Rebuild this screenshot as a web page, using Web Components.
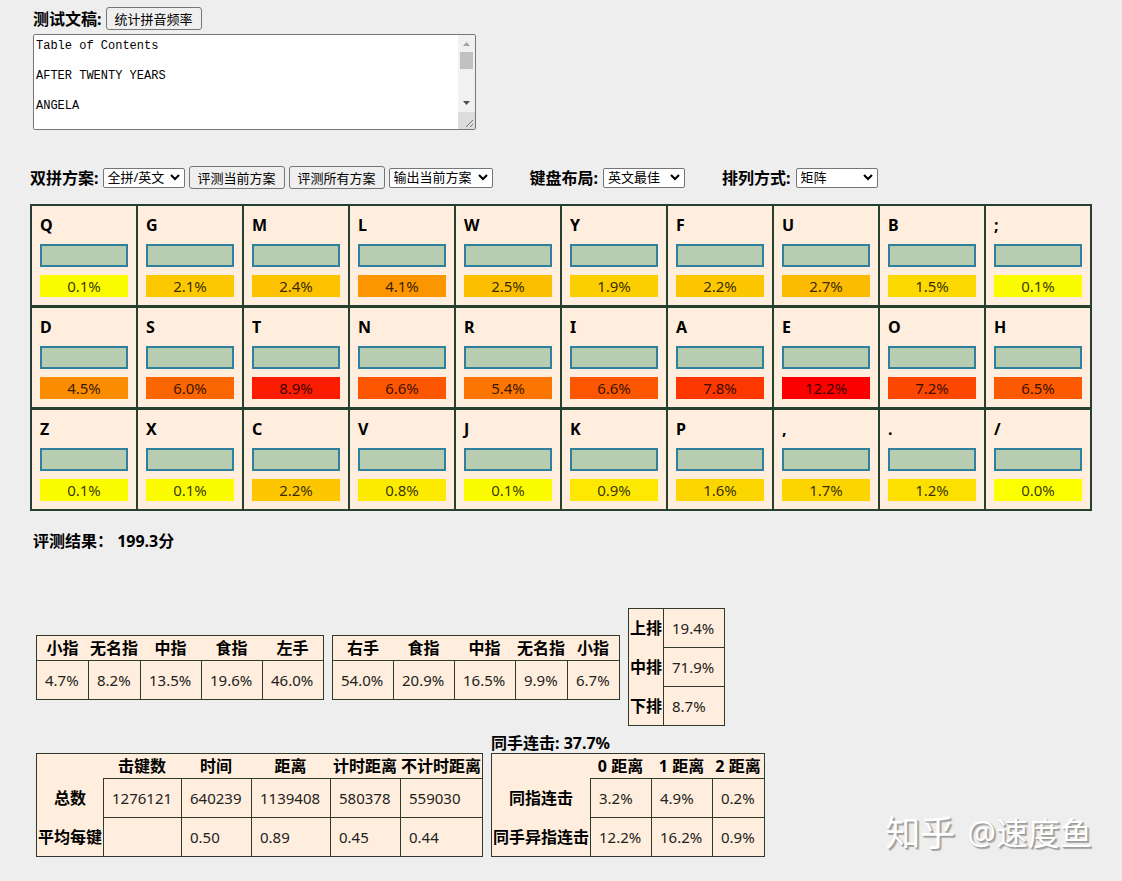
<!DOCTYPE html>
<html lang="zh-CN">
<head>
<meta charset="utf-8">
<meta name="viewport" content="width=device-width, initial-scale=1">
<title>双拼评测</title>
<style>
  body {
    margin: 0;
    padding: 7px 30px 24px;
    background: #eee;
    color: #000;
    font: 16px/24px "Noto Sans", "Noto Sans CJK SC", sans-serif;
  }
  .results { display: flex; flex-wrap: wrap; gap: 8px; margin: 0 6px; }
  .fingers { align-items: center; margin-top: 55px; }
  .totals { align-items: flex-end; margin-top: 7px; }
  h2 { margin: 18px 3px 0; font-size: 16px; line-height: 24px; }
</style>
</head>
<body>
<manuscript-box></manuscript-box>
<scheme-bar></scheme-bar>
<key-board></key-board>
<h2>评测结果： 199.3分</h2>
<div class="results fingers">
  <stat-table data-name="left"></stat-table>
  <stat-table data-name="right"></stat-table>
  <stat-table data-name="rows"></stat-table>
</div>
<div class="results totals">
  <stat-table data-name="effort"></stat-table>
  <stat-table data-name="repeat">同手连击: 37.7%</stat-table>
</div>
<author-mark><span slot="site">知乎</span>@速度鱼</author-mark>

<script>
const controls = `
  * { box-sizing: border-box; }
  label { font-weight: 700; white-space: nowrap; }
  button, select {
    font: 13px "Noto Sans", "Noto Sans CJK SC", sans-serif;
    color: #000; border: 1px solid #767676; margin: 0;
  }
  button { height: 23px; padding: 0 8px; line-height: 20px; background: #efefef; border-radius: 3px; white-space: nowrap; }
  select {
    height: 19px; padding: 0 4px; line-height: 17px; border-radius: 2px; appearance: none;
    background: #fff url("data:image/svg+xml,%3Csvg xmlns='http://www.w3.org/2000/svg' width='10' height='7'%3E%3Cpath d='M1 1l4 4 4-4' fill='none' stroke='%23000' stroke-width='2'/%3E%3C/svg%3E") no-repeat right 4px center;
  }
  .wide { width: 104px; }
  .narrow { width: 82px; }
`;

function define(name, html, setup) {
  customElements.define(name, class extends HTMLElement {
    connectedCallback() {
      if (this.shadowRoot) return;
      const root = this.attachShadow({ mode: 'open' });
      root.innerHTML = typeof html === 'function' ? html(this) : html;
      if (setup) setup(root);
    }
  });
}

define('manuscript-box', `
  <style>${controls}
    :host { display: block; margin: 0 3px; }
    .head { display: flex; align-items: center; gap: 4px; height: 23px; }
    .field { display: flex; width: 443px; max-width: 100%; height: 96px; margin-top: 4px; border: 1px solid #767676; background: #fff; border-radius: 2px; overflow: hidden; }
    textarea { flex: 1; min-width: 0; border: 0; outline: 0; padding: 4px 2px 0; resize: none; overflow: hidden; background: #fff; color: #000; font: 12px/15px "Liberation Mono", monospace; }
    svg { flex: none; width: 17px; height: 94px; }
  </style>
  <div class="head"><label for="text">测试文稿:</label><button type="button">统计拼音频率</button></div>
  <div class="field">
    <textarea id="text">Table of Contents

AFTER TWENTY YEARS

ANGELA
</textarea>
    <svg viewBox="0 0 17 94" aria-hidden="true">
      <path fill="#f1f1f1" d="M0 0h17v77H0z"/>
      <path fill="#dcdcdc" d="M0 77h17v17H0z"/>
      <path fill="#a3a3a3" d="M5 11h7L8.500 7z"/>
      <path fill="#c1c1c1" d="M2 17h13v17H2z"/>
      <path fill="#505050" d="M5 66h7l-3.500 4z"/>
      <path stroke="#777" d="M8 92l7-7M12 92l3-3"/>
    </svg>
  </div>`);

define('scheme-bar', `
  <style>${controls}
    :host { display: flex; flex-wrap: wrap; align-items: center; gap: 4px 37px; margin: 36px 0 15px; }
    div { display: flex; align-items: center; gap: 4px; height: 23px; }
    select { height: 20px; }
    label[for="layout"], label[for="order"] { padding-right: 1px; }
  </style>
  <div>
    <label for="scheme">双拼方案:</label>
    <select id="scheme" class="narrow"><option>全拼/英文</option></select>
    <button type="button">评测当前方案</button>
    <button type="button">评测所有方案</button>
    <select class="wide" aria-label="输出当前方案"><option>输出当前方案</option></select>
  </div>
  <div><label for="layout">键盘布局:</label><select id="layout" class="narrow"><option>英文最佳</option></select></div>
  <div><label for="order">排列方式:</label><select id="order" class="narrow"><option>矩阵</option></select></div>`);

define('key-cap', `
  <style>
    :host { display: grid; grid-template-rows: 22px 23px 22px; gap: 8px; padding: 8px; background: #ffeedd; min-width: 0; }
    b { line-height: 22px; }
    .slotted { box-sizing: border-box; background: #b8cdb0; border: 2px solid #2f7f9f; }
    .rate { background: var(--heat); color: rgb(0 0 0 / 80%); font-size: 15px; line-height: 22px; text-align: center; }
  </style>
  <b><slot name="key"></slot></b><div class="slotted"></div><div class="rate"><slot></slot></div>`);

const keys = [
  'Q 0.1 G 2.1 M 2.4 L 4.1 W 2.5 Y 1.9 F 2.2 U 2.7 B 1.5 ; 0.1',
  'D 4.5 S 6.0 T 8.9 N 6.6 R 5.4 I 6.6 A 7.8 E 12.2 O 7.2 H 6.5',
  'Z 0.1 X 0.1 C 2.2 V 0.8 J 0.1 K 0.9 P 1.6 , 1.7 . 1.2 / 0.0'
].join(' ').split(' ');

// Heat runs from yellow at 0% to pure red at 10% and above.
function keyCaps() {
  let out = '';
  for (let i = 0; i < keys.length; i += 2) {
    const green = Math.max(0, Math.round(255 - keys[i + 1] * 25.5));
    out += `<key-cap style="--heat: rgb(252 ${green} 0)"><span slot="key">${keys[i]}</span>${keys[i + 1]}%</key-cap>`;
  }
  return out;
}

define('key-board', () => `
  <style>
    :host { display: grid; grid-template-columns: repeat(10, 1fr); gap: 3px 2px; padding: 2px; background: #264030; }
  </style>${keyCaps()}`);

const tables = {
  left: { cols: [51, 52, 61, 61, 61], head: ['小指', '无名指', '中指', '食指', '左手'], body: [['4.7%', '8.2%', '13.5%', '19.6%', '46.0%']] },
  right: { cols: [60, 61, 61, 52, 52], head: ['右手', '食指', '中指', '无名指', '小指'], body: [['54.0%', '20.9%', '16.5%', '9.9%', '6.7%']] },
  rows: { cols: [34, 61], side: ['上排', '中排', '下排'], body: [['19.4%'], ['71.9%'], ['8.7%']] },
  effort: {
    cols: [66, 78, 70, 79, 70, 82], head: ['', '击键数', '时间', '距离', '计时距离', '不计时距离'], side: ['总数', '平均每键'],
    body: [['1276121', '640239', '1139408', '580378', '559030'], ['', '0.50', '0.89', '0.45', '0.44']]
  },
  repeat: {
    cols: [98, 61, 61, 52], head: ['', '0 距离', '1 距离', '2 距离'], side: ['同指连击', '同手异指连击'],
    body: [['3.2%', '4.9%', '0.2%'], ['12.2%', '16.2%', '0.9%']]
  }
};

define('stat-table', host => {
  const { cols, head, side, body } = tables[host.dataset.name];
  const width = cols.reduce((a, b) => a + b, 2);
  const cell = text => `<td>${text}</td>`;
  return `
  <style>
    :host { display: block; font-weight: 700; line-height: 20px; }
    table { box-sizing: border-box; width: ${width}px; table-layout: fixed; border: 1px solid #2d3a2c; border-spacing: 0; background: #ffeedd; }
    th, td { box-sizing: border-box; white-space: nowrap; }
    th { padding: 0; font-size: 16px; text-align: center; line-height: 24px; }
    thead th { height: 24px; }
    td { height: 39px; padding: 0 0 0 8px; border: solid #2d3a2c; border-width: 1px 0 0 1px; color: #222; font-size: 15px; font-weight: 400; }
    td:first-child { border-left: 0; }
    tbody:first-of-type:not(thead + tbody) tr:first-child td { border-top: 0; height: 38px; }
  </style>
  <slot></slot>
  <table>
    <colgroup>${cols.map(w => `<col style="width:${w}px">`).join('')}</colgroup>
    ${head ? `<thead><tr>${head.map(t => t ? `<th scope="col">${t}</th>` : '<th></th>').join('')}</tr></thead>` : ''}
    <tbody>${body.map((row, i) => `<tr>${side ? `<th scope="row">${side[i]}</th>` : ''}${row.map(cell).join('')}</tr>`).join('')}</tbody>
  </table>`;
});

define('author-mark', `
  <style>
    :host { position: absolute; right: 30px; top: 811px; display: flex; align-items: center; gap: 12px; height: 44px; color: #fff; font-size: 32px; font-weight: 400; text-shadow: 1px 1px 1px #999, 2px 2px 1px #aaa; white-space: nowrap; }
    .site { font-size: 35px; }
  </style>
  <span class="site"><slot name="site"></slot></span><span><slot></slot></span>`);
</script>
</body>
</html>
